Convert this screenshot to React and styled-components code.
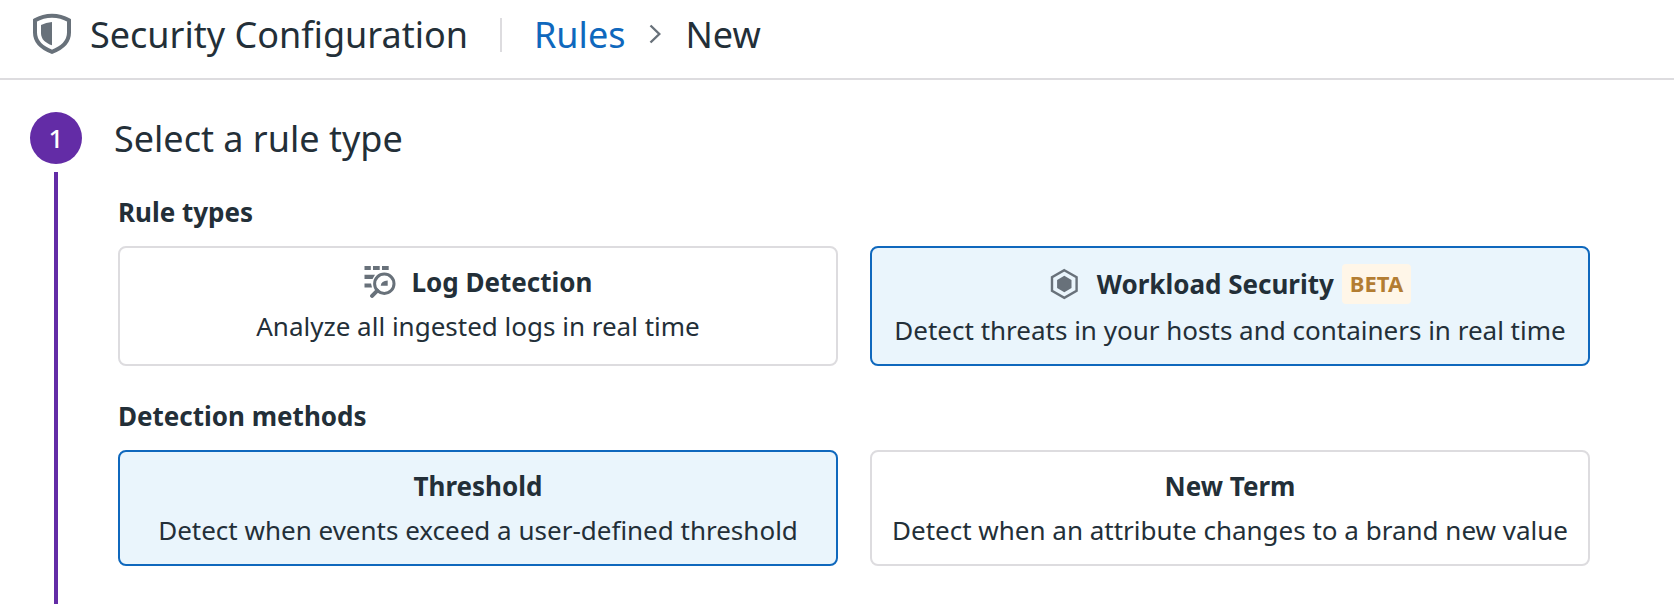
import React from "react";
import styled, { createGlobalStyle } from "styled-components";

const colors = {
  text: "#232f38",
  icon: "#68717a",
  link: "#0f68bd",
  border: "#dddcdf",
  selectedBg: "#eaf5fc",
  step: "#632ca6",
};

const GlobalStyle = createGlobalStyle`
  *, *::before, *::after { box-sizing: border-box; }
  body {
    margin: 0;
    background: #fff;
    color: ${colors.text};
    font-family: "Noto Sans", "Open Sans", sans-serif;
    font-size: 26px;
    line-height: 36px;
  }
`;

const Page = styled.div`
  display: flex;
  flex-direction: column;
  min-height: 100vh;
`;

const Header = styled.header`
  display: flex;
  align-items: center;
  padding: 10px 32px 18px;
  border-bottom: 2px solid ${colors.border};
  font-size: 36px;
  line-height: 50px;
`;

const Title = styled.h1`
  margin: 0 0 0 18px;
  font: inherit;
`;

const Divider = styled.span`
  width: 2px;
  height: 34px;
  margin: 0 32px;
  background: ${colors.border};
`;

const Breadcrumbs = styled.nav`
  display: flex;
  align-items: center;
  gap: 24px;
`;

const CrumbLink = styled.a`
  color: ${colors.link};
  text-decoration: none;
`;

const Icon = styled.svg`
  display: block;
  flex: none;
  color: ${colors.icon};
`;

const Main = styled.main`
  flex: 1;
  display: flex;
  gap: 32px;
  padding: 32px 84px 0 30px;
`;

const StepRail = styled.div`
  display: flex;
  flex-direction: column;
  align-items: center;
  gap: 8px;
`;

const StepNumber = styled.span`
  width: 52px;
  height: 52px;
  border-radius: 50%;
  background: ${colors.step};
  color: #fff;
  font-weight: 500;
  line-height: 52px;
  text-align: center;
`;

const StepLine = styled.span`
  flex: 1;
  width: 4px;
  background: ${colors.step};
`;

const StepBody = styled.section`
  flex: 1;
  min-width: 0;
  padding-bottom: 38px;
`;

const StepTitle = styled.h2`
  margin: 0 0 28px;
  font-size: 36px;
  font-weight: 400;
  line-height: 54px;
`;

const Group = styled.div`
  padding-left: 4px;

  & + & {
    margin-top: 32px;
  }
`;

const GroupLabel = styled.h3`
  margin: 0 0 16px;
  font-size: 26px;
  font-weight: 700;
`;

const Options = styled.div`
  display: grid;
  grid-template-columns: 1fr 1fr;
  gap: 32px;
`;

const Card = styled.label`
  position: relative;
  display: flex;
  flex-direction: column;
  align-items: center;
  gap: 8px;
  padding: 16px;
  border: 2px solid ${colors.border};
  border-radius: 8px;
  text-align: center;
  cursor: pointer;

  &:has(input:checked) {
    border-color: ${colors.link};
    background: ${colors.selectedBg};
  }
`;

const CardInput = styled.input`
  position: absolute;
  inset: 0;
  margin: 0;
  appearance: none;
  cursor: pointer;
`;

const CardTitle = styled.span`
  display: flex;
  align-items: center;
  font-weight: 700;

  ${Icon} {
    margin-right: 16px;
  }
`;

const Badge = styled.span`
  margin-left: 8px;
  padding: 0 8px 2px;
  border-radius: 4px;
  background: #fff6e8;
  color: #b37d32;
  font-size: 22px;
  line-height: 38px;
`;

function ShieldIcon() {
  return (
    <Icon width="40" height="44" viewBox="0 0 40 44" aria-hidden="true">
      <path
        d="M20 2.700Q29 2.700 37 7.300V19.500C37 28.500 30 35 20 38.800C10 35 3 28.500 3 19.500V7.300Q11 2.700 20 2.700Z"
        fill="none"
        stroke="currentColor"
        strokeWidth="4"
      />
      <path d="M20 9Q14 9.300 9 12V20C9 26.500 13.500 30 20 32.300Z" fill="currentColor" />
    </Icon>
  );
}

function ChevronIcon() {
  return (
    <Icon width="12" height="22" viewBox="0 0 12 22" aria-hidden="true">
      <path d="M1.500 1.500L10.300 10L1.500 18.500" fill="none" stroke="currentColor" strokeWidth="2.400" />
    </Icon>
  );
}

function LogSearchIcon() {
  return (
    <Icon width="32" height="32" viewBox="0 0 32 32" aria-hidden="true">
      <g fill="currentColor">
        <path d="M0.500 0H6.800V4H0.500ZM9 0H15.700V4H9ZM18 0H24.700V4H18Z" />
        <path d="M0.500 8.800H11L8.500 13H0.500ZM0.500 17.600H7L8 21.600H0.500Z" />
        <path d="M16.700 19.700Q17.200 14.800 23.700 14.600V19.700Z" />
      </g>
      <circle cx="20.300" cy="17.700" r="9.700" fill="none" stroke="currentColor" strokeWidth="3" />
      <path d="M13.300 24.700L8.100 29.900" stroke="currentColor" strokeWidth="4" strokeLinecap="round" />
    </Icon>
  );
}

function HexagonIcon() {
  return (
    <Icon width="32" height="32" viewBox="0 0 32 32" aria-hidden="true">
      <path
        d="M15.300 2.200L27.600 9.100V22.900L15.300 29.800L3 22.900V9.100Z"
        fill="none"
        stroke="currentColor"
        strokeWidth="2.400"
      />
      <path d="M15.300 7.800L22.500 11.900V20.100L15.300 24.200L8.100 20.100V11.900Z" fill="currentColor" />
    </Icon>
  );
}

const groups = [
  {
    id: "rule-type",
    label: "Rule types",
    selected: "workload",
    options: [
      {
        id: "log",
        icon: <LogSearchIcon />,
        title: "Log Detection",
        text: "Analyze all ingested logs in real time",
      },
      {
        id: "workload",
        icon: <HexagonIcon />,
        title: "Workload Security",
        badge: "BETA",
        text: "Detect threats in your hosts and containers in real time",
      },
    ],
  },
  {
    id: "detection-method",
    label: "Detection methods",
    selected: "threshold",
    options: [
      {
        id: "threshold",
        title: "Threshold",
        text: "Detect when events exceed a user-defined threshold",
      },
      {
        id: "new-term",
        title: "New Term",
        text: "Detect when an attribute changes to a brand new value",
      },
    ],
  },
];

export default function App() {
  return (
    <Page>
      <GlobalStyle />
      <Header>
        <ShieldIcon />
        <Title>Security Configuration</Title>
        <Divider />
        <Breadcrumbs aria-label="Breadcrumb">
          <CrumbLink href="#rules">Rules</CrumbLink>
          <ChevronIcon />
          <span aria-current="page">New</span>
        </Breadcrumbs>
      </Header>
      <Main>
        <StepRail>
          <StepNumber>1</StepNumber>
          <StepLine />
        </StepRail>
        <StepBody>
          <StepTitle>Select a rule type</StepTitle>
          {groups.map((group) => (
            <Group key={group.id} role="radiogroup" aria-labelledby={group.id}>
              <GroupLabel id={group.id}>{group.label}</GroupLabel>
              <Options>
                {group.options.map((option) => (
                  <Card key={option.id}>
                    <CardInput
                      type="radio"
                      name={group.id}
                      value={option.id}
                      defaultChecked={option.id === group.selected}
                    />
                    <CardTitle>
                      {option.icon}
                      {option.title}
                      {option.badge && <Badge>{option.badge}</Badge>}
                    </CardTitle>
                    <span>{option.text}</span>
                  </Card>
                ))}
              </Options>
            </Group>
          ))}
        </StepBody>
      </Main>
    </Page>
  );
}
